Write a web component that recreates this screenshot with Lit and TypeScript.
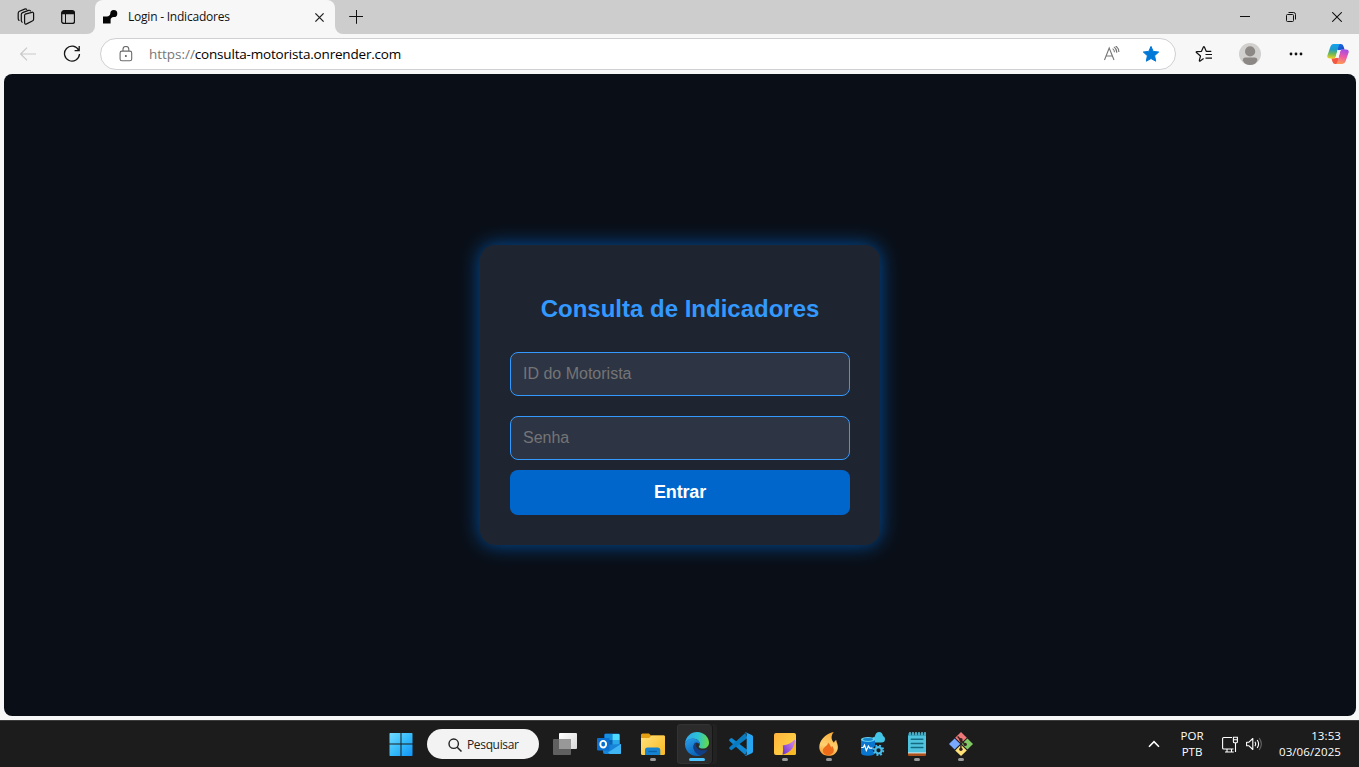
import { LitElement, html, css, svg } from "lit";
import { customElement } from "lit/decorators.js";

const icon = (w: number, h: number, body: unknown) =>
  html`<svg width=${w} height=${h} viewBox="0 0 ${w} ${h}" fill="none">${body}</svg>`;

@customElement("browser-tabs")
class BrowserTabs extends LitElement {
  static styles = css`
    :host { display: flex; height: 34px; background: linear-gradient(#cdcdcd 17px, #f7f7f7 17px); color: #111; }
    svg { display: block; }
    .left { width: 95px; box-sizing: border-box; padding-left: 5px; display: flex; background: #cdcdcd; border-radius: 0 0 8px 0; }
    .slot { width: 42px; display: grid; place-items: center; }
    .tab { width: 240px; box-sizing: border-box; padding: 0 9px 0 8px; display: flex; align-items: center; background: #f7f7f7; border-radius: 8px 8px 0 0; }
    .title { flex: 1; margin-left: 10px; font: 12px/18px "Segoe UI", "Open Sans", sans-serif; letter-spacing: -0.22px; white-space: nowrap; }
    .right { flex: 1; display: flex; background: #cdcdcd; border-radius: 0 0 0 8px; }
    .spacer { flex: 1; }
    .win { width: 46px; display: grid; place-items: center; }
    .win:last-child { margin-right: -1px; }
  `;
  render() {
    return html`
      <div class="left">
        <div class="slot">${icon(18, 18, svg`<g stroke="#111" stroke-width="1.2" stroke-linejoin="round" stroke-linecap="round">
          <path d="M8.2 6.2 14.8 4.3Q16.6 3.9 16.6 5.6V11.2Q16.6 12.6 15.3 13L9.6 15.9Q7.7 16.6 7.6 14.8V7.8Q7.5 6.6 8.2 6.2Z"/>
          <path d="M5.2 14.2Q4.3 13.8 4.3 12.6V6.6Q4.3 5.2 5.6 4.6L11.5 2.4Q13 1.9 13.5 3"/>
          <path d="M2 12.4Q1.2 12 1.2 10.6V5.2Q1.2 3.9 2.5 3.3L7.6 1.1Q9 .7 9.7 1.4"/></g>`)}</div>
        <div class="slot">${icon(14, 14, svg`<rect x=".7" y=".7" width="12.8" height="12.8" rx="2.3" stroke="#111" stroke-width="1.3"/><path d="M.7 4.3V3Q.7.7 3 .7H11Q13.4.7 13.4 3V4.3Z" fill="#111"/><path d="M4.5 4V13.2" stroke="#111" stroke-width="1"/>`)}</div>
      </div>
      <div class="tab">
        ${icon(15, 14, svg`<path d="M0 6.5H3.9Q7 6.3 7.3 3.6A3.5 3.5 0 1 1 10.7 7.1Q7.6 7.4 7.6 10V13.6H0Z" fill="#050505"/>`)}
        <span class="title">Login - Indicadores</span>
        ${icon(14, 14, svg`<path d="m3.4 3.4 8.2 8.2m0-8.2-8.2 8.2" stroke="#222" stroke-width="1.3"/>`)}
      </div>
      <div class="right">
        <div class="slot">${icon(14, 14, svg`<path d="M.2 6.5H14M7.5 0V13.8" stroke="#111" stroke-width="1"/>`)}</div>
        <div class="spacer"></div>
        <div class="win">${icon(10, 10, svg`<path d="M0 4.5H10" stroke="#111"/>`)}</div>
        <div class="win">${icon(10, 10, svg`<rect x=".5" y="2.5" width="7" height="7" rx="1" stroke="#111"/><path d="M2.5.5H7.5Q9.5.5 9.5 2.5V7.5" stroke="#111"/>`)}</div>
        <div class="win">${icon(10, 10, svg`<path d="m.2.2 9.6 9.6m0-9.6L.2 9.8" stroke="#111" stroke-width="1.05"/>`)}</div>
      </div>`;
  }
}

@customElement("browser-toolbar")
class BrowserToolbar extends LitElement {
  static styles = css`
    :host { display: flex; height: 40px; align-items: center; padding-left: 6px; box-sizing: border-box; background: #f7f7f7; }
    svg { display: block; }
    .slot { width: 44px; display: grid; place-items: center; }
    .address { flex: none; width: 1076px; height: 32px; box-sizing: border-box; margin: 0 5px 0 6px; padding: 0 5px 0 18px; border: 1px solid #d0d0d4; border-radius: 16px; background: #fff; display: flex; align-items: center; }
    .url { flex: 1; margin-left: 16px; font: 13.5px/20px "Segoe UI", "Open Sans", sans-serif; letter-spacing: -0.19px; color: #000; white-space: nowrap; }
    .scheme { color: #777; letter-spacing: -0.03px; }
    .mini { width: 39px; display: grid; place-items: center; }
    .tool { width: 46px; flex: none; display: grid; place-items: center; }
    .copilot { width: 38px; flex: none; display: grid; place-items: center; }
  `;
  render() {
    return html`
      <div class="slot">${icon(16, 14, svg`<path d="M16 7H.8M7 .7.7 7 7 13.3" stroke="#c9c9c9" stroke-width="1.2"/>`)}</div>
      <div class="slot">${icon(18, 18, svg`<path d="M15.7 5.2A7.5 7.5 0 1 0 16.5 9M16.2 1V5.6H11.6" stroke="#161616" stroke-width="1.3"/>`)}</div>
      <div class="address">
        ${icon(14, 16, svg`<rect x="1.1" y="5.1" width="11.6" height="9.6" rx="1.8" stroke="#6b6b6b" stroke-width="1.1"/><path d="M4 5V3.2A2.9 2.7 0 0 1 9.8 3.2V5" stroke="#6b6b6b" stroke-width="1.1"/><circle cx="6.9" cy="9.9" r="1" fill="#555"/>`)}
        <span class="url"><span class="scheme">https://</span>consulta-motorista.onrender.com</span>
        <div class="mini">${icon(18, 16, svg`<g stroke="#777" stroke-width="1.1"><path d="M1.5 14 6.2 2 11 14M3.1 10H9.4"/><path d="M9.6 2.6Q11.4 3.8 11.5 6.2M10.9.9Q13.8 2.8 13.8 6.7M12.6-.2Q15.9 2.2 15.9 6"/></g>`)}</div>
        <div class="mini">${icon(18, 18, svg`<path d="m9 1.4 2.2 5 5.5.6-4.1 3.7 1.1 5.5L9 13.5l-4.7 2.7 1.1-5.5L1.3 7l5.5-.6Z" fill="#0078d7" stroke="#0078d7" stroke-linejoin="round"/>`)}</div>
      </div>
      <div class="tool">${icon(18, 18, svg`<g stroke="#111" stroke-width="1.2" stroke-linejoin="round"><path d="M8.6 13.6 5.2 16Q4.1 16.6 4.4 15.2L5.5 11 1.4 7.5Q.7 6.8 1.8 6.7L6.5 6.3 8.4 2.1Q8.9 1.2 9.4 2.1L11.2 6.3H16.3"/><path d="M10.5 9.5H17M10.5 13.1H17"/></g>`)}</div>
      <div class="tool">${icon(22, 22, svg`<circle cx="11" cy="11" r="11" fill="#d2d0ce"/><circle cx="11.1" cy="8.4" r="5.1" fill="#8b8885"/><path d="M3.8 17.4Q3.8 14.4 6.5 14.4H15.7Q18.4 14.4 18.4 17.4Q16.2 22 11.1 22T3.8 17.4Z" fill="#8b8885"/>`)}</div>
      <div class="tool">${icon(14, 4, svg`<g fill="#111"><circle cx="2" cy="2" r="1.4"/><circle cx="7" cy="2" r="1.4"/><circle cx="12" cy="2" r="1.4"/></g>`)}</div>
      <div class="copilot">${icon(22, 22, svg`
        <defs>
          <linearGradient id="ca" x1="5" y1="1" x2="4" y2="16" gradientUnits="userSpaceOnUse"><stop stop-color="#13a1f0"/><stop offset=".35" stop-color="#1d9cc9"/><stop offset=".65" stop-color="#6db956"/><stop offset="1" stop-color="#ffd21c"/></linearGradient>
          <linearGradient id="cb" x1="18" y1="6" x2="14" y2="21" gradientUnits="userSpaceOnUse"><stop stop-color="#9a4cf0"/><stop offset=".5" stop-color="#ea5aa7"/><stop offset="1" stop-color="#ff9a55"/></linearGradient>
          <linearGradient id="cc" x1="11" y1="1" x2="17" y2="7" gradientUnits="userSpaceOnUse"><stop stop-color="#1670e0"/><stop offset="1" stop-color="#1c45c8"/></linearGradient>
        </defs>
        <path d="M11 1H13.8Q15.8 1 16.5 3.2L17.6 6.8H14.4Q12.6 6.8 11.6 7.4L9.8 6Z" fill="url(#cc)"/>
        <path d="M11 21H8.2Q6.2 21 5.5 18.8L4.4 15.2H7.6Q9.4 15.2 10.4 14.6L12.2 16Z" fill="#f4563f"/>
        <path d="M13 1H6.6Q4.2 1 3.3 4L.5 12.2Q-.5 15.6 2.8 15.6H6.4Q8.2 15.6 8.8 13.5L11.2 4.6Q11.8 1.8 13 1Z" fill="url(#ca)"/>
        <path d="M9 21H15.4Q17.8 21 18.7 18L21.5 9.8Q22.5 6.4 19.2 6.4H15.6Q13.8 6.4 13.2 8.5L10.8 17.4Q10.2 20.2 9 21Z" fill="url(#cb)"/>
        <path d="M10.5 7.2H13.2L11.5 14.8H8.8Z" fill="#f7f7f7"/>`)}</div>`;
  }
}

@customElement("login-page")
class LoginPage extends LitElement {
  static styles = css`
    :host { flex: 1; display: grid; place-items: center; margin: 0 3px 0 4px; border-radius: 8px; overflow: hidden; background: #0a0f17; font-family: Arial, "Liberation Sans", sans-serif; }
    .card { width: 400px; height: 300px; box-sizing: border-box; padding: 30px; border-radius: 15px; background: #1e2530; box-shadow: 0 0 20px rgba(0, 102, 204, 0.75); display: flex; flex-direction: column; }
    h2 { margin: 20px 0 29px; font-size: 24px; line-height: 28px; text-align: center; color: #3399ff; }
    input { box-sizing: border-box; width: 100%; height: 44px; margin: 0 0 20px; padding: 12px; border: 1px solid #3399ff; border-radius: 8px; background: #2d3444; color: #fff; font: 16px/18px Arial, "Liberation Sans", sans-serif; }
    input::placeholder { color: #757575; opacity: 1; }
    input + input { margin-bottom: 10px; }
    button { height: 45px; padding: 0; border: 0; border-radius: 8px; background: #0066cc; color: #fff; font: bold 18px/21px Arial, "Liberation Sans", sans-serif; letter-spacing: -0.15px; }
  `;
  render() {
    return html`<div class="card">
      <h2>Consulta de Indicadores</h2>
      <input type="text" placeholder="ID do Motorista" />
      <input type="password" placeholder="Senha" />
      <button>Entrar</button>
    </div>`;
  }
}

const apps = [
  { name: "outlook", art: svg`
    <rect x="7" y="1.5" width="16" height="14" rx="1.5" fill="#0c64b8"/><path d="M8 2H15.5V8H8Z" fill="#1490df"/><path d="M15.5 2H21.5Q22.5 2 22.5 3V8H15.5Z" fill="#50d9ff"/><path d="M15.5 8H22.5V14H15.5Z" fill="#28a8ea"/>
    <path d="M6 13 24 12V21Q24 22 23 22H8Q6 22 6 20Z" fill="#1784d8"/><path d="M24 12 11 20.5 13 22H23Q24 22 24 21Z" fill="#3fb6f3"/><rect y="6" width="12.5" height="12.5" rx="1" fill="#0a6fce"/><ellipse cx="6.2" cy="12.2" rx="2.9" ry="3.3" stroke="#fff" stroke-width="1.9"/>` },
  { name: "files", run: true, art: svg`
    <defs><linearGradient id="fa" x1="0" y1="5" x2="20" y2="23" gradientUnits="userSpaceOnUse"><stop stop-color="#ffe07a"/><stop offset="1" stop-color="#fbbd29"/></linearGradient></defs>
    <path d="M0 3Q0 1.5 1.5 1.5H8L10 3.5H23Q24 3.5 24 5V10H0Z" fill="#e3a013"/><path d="M0 6H8L10.5 3.5H23Q24 3.5 24 5V21.5Q24 23 22.5 23H1.5Q0 23 0 21.5Z" fill="url(#fa)"/><path d="M4 23V18Q4 15.5 6.5 15.5H17Q19.3 15.5 19.3 18V23Z" fill="#1583d2"/><path d="M7.5 19.5H15.8" stroke="#0861a9" stroke-width="1.3"/>` },
  { name: "edge", active: true, art: svg`
    <defs><linearGradient id="ea" x1="1" y1="6" x2="24" y2="9" gradientUnits="userSpaceOnUse"><stop stop-color="#31a6ea"/><stop offset=".5" stop-color="#2bc3d5"/><stop offset="1" stop-color="#66dc45"/></linearGradient><linearGradient id="eb" x1="3" y1="8" x2="10" y2="24" gradientUnits="userSpaceOnUse"><stop stop-color="#2497e3"/><stop offset="1" stop-color="#0b62b7"/></linearGradient></defs>
    <path d="M0 11.2C.8 4.8 5.8 0 12 0 19 0 24 5.2 24 10.7 24 14.2 21.2 16.5 17.9 16.5 14.3 16.5 13.2 15 14.3 13.8 15.8 12 14.4 7.2 9 6.7 4.8 6.3 1.6 8.3 0 11.2Z" fill="url(#ea)"/>
    <path d="M0 11.2C1.7 7.7 5.6 5.9 9.5 6.7 13.8 7.6 15.2 10.5 14.6 12.6 13.5 9.8 9.8 10.1 8.7 13.2 7.5 17 10.5 22 16.8 23 8.5 26.3-.5 20.5 0 11.2Z" fill="url(#eb)"/>
    <path d="M8.7 13.2C9 11.3 10.6 10 12 10.2 8.6 15.1 14.3 20.5 22.6 17.4 21 20.8 18 22.9 15.2 23.2 10.4 22 7.8 17.5 8.7 13.2Z" fill="#123e86"/>` },
  { name: "code", art: svg`
    <path d="m1.8 6.2-1.4 1.4Q-.2 8.3.5 9L16.2 22.9 18.4 18.1 3.1 6.3Q2.5 5.7 1.8 6.2Z" fill="#1087d2"/><path d="m1.8 18-1.4-1.3Q-.2 16 .5 15.3L16.2 1 18.4 6 3.1 17.8Q2.4 18.4 1.8 18Z" fill="#087bc1"/><path d="m17.2.4 5.6 2.5Q24 3.5 24 4.8V19.2Q24 20.6 22.8 21.2L17.2 23.8Q16.4 24.2 15.7 23.4 17.7 24.1 17.7 21.7V2.4Q17.7.1 15.7.8 16.4 0 17.2.4Z" fill="#26a6f2"/>` },
  { name: "notes", run: true, art: svg`
    <defs><linearGradient id="na" x1="1" y1="2" x2="23" y2="20" gradientUnits="userSpaceOnUse"><stop stop-color="#ffb33d"/><stop offset="1" stop-color="#ffda45"/></linearGradient><linearGradient id="nb" x1="9" y1="20" x2="20" y2="12" gradientUnits="userSpaceOnUse"><stop stop-color="#6d36c9"/><stop offset="1" stop-color="#c57be8"/></linearGradient></defs>
    <rect x="1" y="1" width="22" height="22" rx="2" fill="url(#na)"/><path d="M9.5 23 23 8V21Q23 23 21 23Z" fill="#f7b924"/><path d="M9.5 22.8Q10.5 17 9.8 13.2 15.8 13.5 22 7.5 21.7 19.5 9.5 22.8Z" fill="url(#nb)"/>` },
  { name: "flame", run: true, art: svg`
    <defs><linearGradient id="ga" x1="17" y1="0" x2="10" y2="24" gradientUnits="userSpaceOnUse"><stop stop-color="#f9aa34"/><stop offset=".6" stop-color="#ffd171"/><stop offset="1" stop-color="#f69a32"/></linearGradient></defs>
    <path d="M16.8 0C11.4 1 5.6 5.2 3.2 10.4.6 16.8 3.6 23.3 11.2 23.8 18 24.1 22 18.7 20.6 12.9 20.2 11 19.3 9.8 19.3 8 18.2 8.4 17.3 9.4 17 10.7 14 8 13.6 3.8 16.8 0Z" fill="url(#ga)"/><path d="M10.9 10.5C11.4 13.6 5.6 15 5.8 18.8 6.2 24.6 16.8 24.4 16.8 18 16.8 16.2 15.8 15.4 15.3 14 14.5 14.4 14.2 15.1 14.2 16 13.8 13.7 12.8 12 10.9 10.5Z" fill="#ed6b19"/>` },
  { name: "database", art: svg`
    <path d="M14.5 10.5Q11 10.4 11 7.6 11 5.2 13.8 4.8 14.5 0 18.2 0 21.3 0 22 4 24 4.5 24 7 24 10.5 20.5 10.5Z" fill="#43c5e7"/>
    <path d="M0 7.5V20.8Q0 23.8 7 23.8T14 20.8V7.5Z" fill="#0875cf"/><ellipse cx="7" cy="7.5" rx="7" ry="2.6" fill="#65d0ee"/><ellipse cx="7" cy="7.5" rx="5" ry="1.4" fill="#1687cc"/><path d="M.3 15.5H2.2L3.5 13 5.3 18.5 7.4 14 8.8 16.2H11.5" stroke="#fff" stroke-width="1.2"/>
    <circle cx="17.5" cy="18.3" r="5.6" fill="#1c1c1c"/><circle cx="17.5" cy="18.3" r="3.2" stroke="#47bdec" stroke-width="2.2"/><circle cx="17.5" cy="18.3" r="4.8" stroke="#47bdec" stroke-width="1.8" stroke-dasharray="1.9 1.87"/>` },
  { name: "notepad", run: true, art: svg`
    <rect x="3" y="20" width="18" height="4" rx="1" fill="#a9501c"/><rect x="3" y="20" width="18" height="1.4" fill="#eee"/><path d="M3 2H21V20.5H3Z" fill="#4fc3dd"/><path d="M3 1.2H21V3.4H3Z" fill="#17657d"/><path d="M5 0V3.2M8 0V3.2M11 0V3.2M14 0V3.2M17 0V3.2M20 0V3.2" stroke="#62d5ee" stroke-width="1.3"/><path d="M6.3 7.3H17.8M6.3 11.4H17.8M6.3 15.5H17.8" stroke="#146a83" stroke-width="1.5" stroke-linecap="round"/>` },
  { name: "git", run: true, art: svg`
    <path d="m12 0 5.8 5.8L12 11.2 6.2 5.8Z" fill="#ee7777"/><path d="m5.6 6.4 5.6 5.6-5.6 5.6L0 12Z" fill="#78a9ff"/><path d="m18.4 6.4L24 12l-5.6 5.6L12.8 12Z" fill="#80c864"/><path d="m12 12.8 5.8 5.6L12 24l-5.8-5.6Z" fill="#ffe178"/>
    <path d="M8.6 4.6 11.9 8V17M12 8.5 16 12.3" stroke="#302222" stroke-width="1.4"/><circle cx="11.9" cy="7.8" r="1.7" fill="#302222"/><circle cx="16.2" cy="12.4" r="1.7" fill="#302222"/><circle cx="11.9" cy="17.2" r="1.7" fill="#302222"/>` },
];

@customElement("task-bar")
class TaskBar extends LitElement {
  static styles = css`
    :host { display: grid; grid-template-columns: 1fr auto 1fr; height: 47px; box-sizing: border-box; border-top: 1px solid #3c3c3c; background: #1c1c1c; color: #fff; font-family: "Segoe UI", "Open Sans", sans-serif; }
    svg { display: block; }
    .apps { display: flex; align-items: center; grid-column: 2; }
    .start { width: 49px; display: grid; place-items: center; }
    .search { width: 112px; height: 30px; margin: 0 4px 0 2px; border-radius: 15px; background: #f3f3f3; color: #222; display: flex; align-items: center; box-sizing: border-box; padding-left: 21px; gap: 5px; font-size: 12px; letter-spacing: -0.35px; }
    .search svg { margin-top: 2px; }
    .app { width: 44px; height: 40px; display: grid; grid-template-rows: 31px 4px; row-gap: 2px; justify-items: center; align-items: end; box-sizing: border-box; }
    .app svg { margin-bottom: -1px; }
    .active { width: 40px; margin: 0 2px; height: 40px; border-radius: 4px; background: #2b2b2b; box-shadow: inset -4px 0 #222, inset -5px 0 #161616, inset 0 0 0 1px #333; }
    .dot { width: 6px; height: 3px; border-radius: 2px; background: #999; }
    .active .dot { width: 16px; background: #4cc2ff; }
    .tray { display: flex; align-items: center; justify-content: flex-end; padding: 0 18px 1px 0; font-size: 11.5px; line-height: 16px; }
    .tray svg { margin-top: 1px; }
    .lang { margin-left: 19px; width: 26px; text-align: center; white-space: nowrap; }
    .net { margin-left: 17px; }
    .vol { margin-left: 8px; }
    .clock { margin-left: 15px; width: 63px; white-space: nowrap; display: flex; flex-direction: column; align-items: flex-end; letter-spacing: 0.1px; }
  `;
  render() {
    return html`
      <div class="apps">
        <div class="start">${icon(24, 24, svg`<defs><linearGradient id="w" x1="0" y1="0" x2="24" y2="24" gradientUnits="userSpaceOnUse"><stop stop-color="#77dcff"/><stop offset=".5" stop-color="#38bdfb"/><stop offset="1" stop-color="#1093f7"/></linearGradient></defs><path d="M1 1H11.5V11.5H.5V1.5ZM12.5 1H23L23.5 1.5V11.5H12.5ZM.5 12.5H11.5V24H1L.5 23.5ZM12.5 12.5H23.5V23.5L23 24H12.5Z" fill="url(#w)"/>`)}</div>
        <div class="search">${icon(14, 14, svg`<circle cx="5.7" cy="5.7" r="4.7" stroke="#222" stroke-width="1.4"/><path d="m9.2 9.2 4.3 4.3" stroke="#222" stroke-width="1.5"/>`)}<span>Pesquisar</span></div>
        <div class="app">${icon(24, 24, svg`<defs><linearGradient id="ta" x1="7" y1="1" x2="24" y2="17" gradientUnits="userSpaceOnUse"><stop stop-color="#fff"/><stop offset="1" stop-color="#d7d7d7"/></linearGradient></defs><rect x="6" y="1" width="18" height="16" rx="1" fill="url(#ta)"/><rect y="7" width="18" height="16" rx="1" fill="#606060"/><path d="M6 7H18V17H6Z" fill="#989898"/>`)}</div>
        ${apps.map((a) => html`<div class="app ${a.active ? "active" : ""}">${icon(24, 24, a.art)}${a.run || a.active ? html`<i class="dot"></i>` : ""}</div>`)}
      </div>
      <div class="tray">
        ${icon(12, 8, svg`<path d="m1 6.7 5-5 5 5" stroke="#fff" stroke-width="1.6"/>`)}
        <div class="lang">POR<br />PTB</div>
        <div class="net">${icon(16, 17, svg`<g stroke="#fff" stroke-width="1.1"><path d="M10 1.5H1.8Q.6 1.5.6 2.7V12Q.6 13 1.8 13H11.5M3 16H11.8M5 13V16M9.5 13V16M13.5 7V16"/><path d="M11.4 1.2H15.4V5.8Q15.4 6.8 14.4 6.8H12.4Q11.4 6.8 11.4 5.8ZM11.4 3.8H15.4"/></g>`)}</div>
        <div class="vol">${icon(17, 14, svg`<path d="M.6 5.2H3L6.8 1.5V12.5L3 8.8H.6Z" stroke="#fff" stroke-width="1.1" stroke-linejoin="round"/><path d="M9 4.8Q10.5 7 9 9.2M11.2 3Q14 7 11.2 11" stroke="#fff" stroke-width="1.1"/><path d="M13.2 1.2Q17.5 7 13.2 12.8" stroke="#666" stroke-width="1.1"/>`)}</div>
        <div class="clock"><span>13:53</span><span>03/06/2025</span></div>
      </div>`;
  }
}

@customElement("app-root")
class AppRoot extends LitElement {
  static styles = css`
    :host { display: flex; flex-direction: column; width: 1359px; height: 767px; overflow: hidden; background: #f7f7f7; }
    browser-tabs, browser-toolbar, task-bar { flex: none; }
    task-bar { margin-top: 4px; }
  `;
  render() {
    return html`<browser-tabs></browser-tabs><browser-toolbar></browser-toolbar><login-page></login-page><task-bar></task-bar>`;
  }
}
